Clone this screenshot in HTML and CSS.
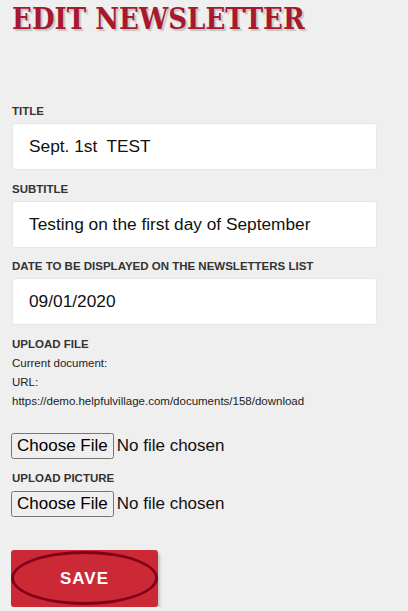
FILE: index.html
```html
<!DOCTYPE html>
<html>
<head>
    <title>Edit Newsletter</title>
    <link rel="stylesheet" href="styles.css">
</head>
<body>
    <div class="page">
        <h1>Edit Newsletter</h1>

        <form class="edit-form">
            <div class="field">
                <label>Title</label>
                <input type="text" class="text-input" value="Sept. 1st  TEST">
            </div>
            <div class="field">
                <label>Subtitle</label>
                <input type="text" class="text-input" value="Testing on the first day of September">
            </div>
            <div class="field">
                <label>Date to be displayed on the newsletters list</label>
                <input type="text" class="text-input" value="09/01/2020">
            </div>

            <div class="field upload">
                <label>Upload file</label>
                <div class="doc-info">Current document:</div>
                <div class="doc-info">URL:</div>
                <div class="doc-info">https://demo.helpfulvillage.com/documents/158/download</div>
                <input type="file" class="file-input">
            </div>
            <div class="field picture">
                <label>Upload picture</label>
                <input type="file" class="file-input">
            </div>

            <button type="button" class="btn-save">Save</button>
        </form>
    </div>
</body>
</html>
```

FILE: styles.css
```css
body {
    margin: 0;
    background: #efefef;
    font-family: Arial, "Liberation Sans", sans-serif;
    color: #333;
}
.page {
    padding: 0 31px 0 12px;
}
h1 {
    margin: 0;
    padding-top: 1px;
    line-height: 36px;
    font-family: "DejaVu Serif Condensed", "DejaVu Serif", serif;
    font-stretch: condensed;
    font-weight: bold;
    font-size: 29px;
    text-transform: uppercase;
    color: #a6192e;
    text-shadow: 2px 2px 1px #c6c6c6;
}
.edit-form {
    margin-top: 68px;
}
.field {
    margin-bottom: 12.5px;
}
.field label {
    display: block;
    font-size: 11.5px;
    line-height: 13px;
    font-weight: bold;
    text-transform: uppercase;
    color: #333;
    margin-bottom: 5px;
}
.text-input {
    display: block;
    box-sizing: border-box;
    width: 100%;
    height: 47px;
    padding: 0 16px;
    border: 1px solid #e6e6e6;
    border-radius: 3px;
    background: #fff;
    font-family: Arial, "Liberation Sans", sans-serif;
    font-size: 17.3px;
    color: #111;
}
.upload {
    margin-bottom: 13px;
}
.upload label {
    margin-bottom: 3px;
}
.doc-info {
    font-size: 11.5px;
    line-height: 19px;
    color: #222;
}
.upload .file-input {
    margin-top: 22px;
}
.picture label {
    margin-bottom: 6px;
}
.file-input {
    display: block;
    margin-left: -1px;
    font-family: Arial, "Liberation Sans", sans-serif;
    font-size: 17px;
    color: #111;
}
.file-input::file-selector-button {
    padding: 1px 4px;
    margin-right: 3px;
}
.btn-save {
    position: relative;
    margin-top: 21px;
    margin-left: -1px;
    width: 147px;
    height: 57px;
    border: none;
    border-radius: 3px;
    background: #cc2936;
    color: #fff;
    font-family: Arial, "Liberation Sans", sans-serif;
    font-size: 17px;
    font-weight: bold;
    letter-spacing: 1px;
    text-transform: uppercase;
    box-shadow: 2px 3px 3px rgba(0,0,0,0.18);
}
.btn-save::after {
    content: "";
    position: absolute;
    left: 0;
    right: 0;
    top: 1px;
    bottom: 2px;
    border: 3px solid #82001a;
    border-radius: 50%;
}
```
